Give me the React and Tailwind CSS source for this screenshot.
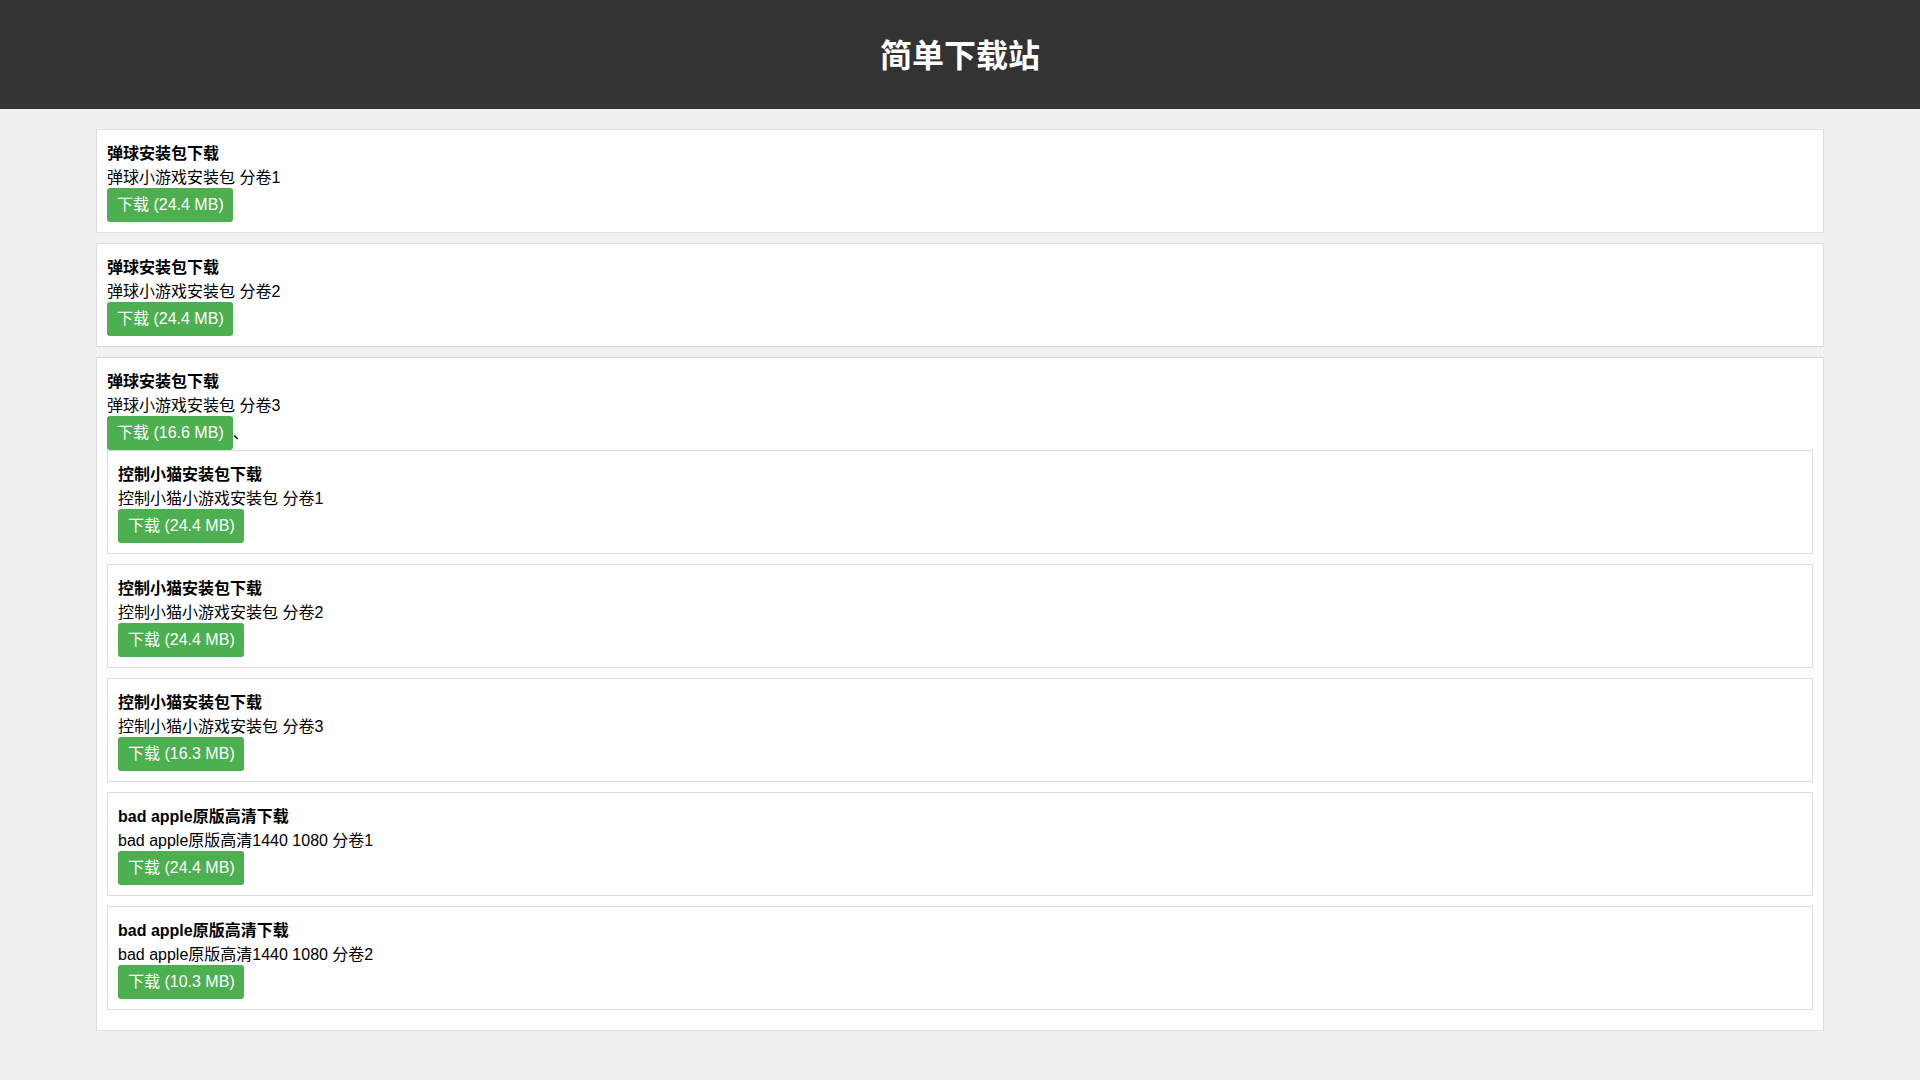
import React from "react";

const font = { fontFamily: '"Liberation Sans", "Noto Sans CJK SC", Arial, sans-serif' };

function Item({ title, desc, size, children, trailing }) {
  return (
    <div className="bg-white border border-[#dddddd] p-[10px] mb-[10px]">
      <div className="pt-[2px] font-bold text-[16px] leading-[23px] text-black">{title}</div>
      <div className="pt-[1px] text-[16px] leading-[23px] text-black">{desc}</div>
      <div className="flex items-baseline -mt-[1px]">
        <a className="inline-flex items-center h-[34px] pl-[10px] pr-[9px] rounded-[3px] bg-[#4CAF50] text-white text-[16px] leading-normal cursor-pointer">
          下载 ({size})
        </a>
        {trailing ? <span className="text-[16px] leading-[18px] text-black">{trailing}</span> : null}
      </div>
      {children}
    </div>
  );
}

export default function App() {
  return (
    <div className="min-h-screen bg-[#f0f0f0]" style={font}>
      <header className="h-[109px] pt-[3px] bg-[#333333] flex items-center justify-center">
        <h1 className="text-white text-[32px] font-bold leading-normal">简单下载站</h1>
      </header>
      <main className="w-[90%] mx-auto pt-[20px]">
        <Item title="弹球安装包下载" desc="弹球小游戏安装包 分卷1" size="24.4 MB" />
        <Item title="弹球安装包下载" desc="弹球小游戏安装包 分卷2" size="24.4 MB" />
        <Item title="弹球安装包下载" desc="弹球小游戏安装包 分卷3" size="16.6 MB" trailing="、">
          <Item title="控制小猫安装包下载" desc="控制小猫小游戏安装包 分卷1" size="24.4 MB" />
          <Item title="控制小猫安装包下载" desc="控制小猫小游戏安装包 分卷2" size="24.4 MB" />
          <Item title="控制小猫安装包下载" desc="控制小猫小游戏安装包 分卷3" size="16.3 MB" />
          <Item title="bad apple原版高清下载" desc="bad apple原版高清1440 1080 分卷1" size="24.4 MB" />
          <Item title="bad apple原版高清下载" desc="bad apple原版高清1440 1080 分卷2" size="10.3 MB" />
        </Item>
      </main>
    </div>
  );
}
